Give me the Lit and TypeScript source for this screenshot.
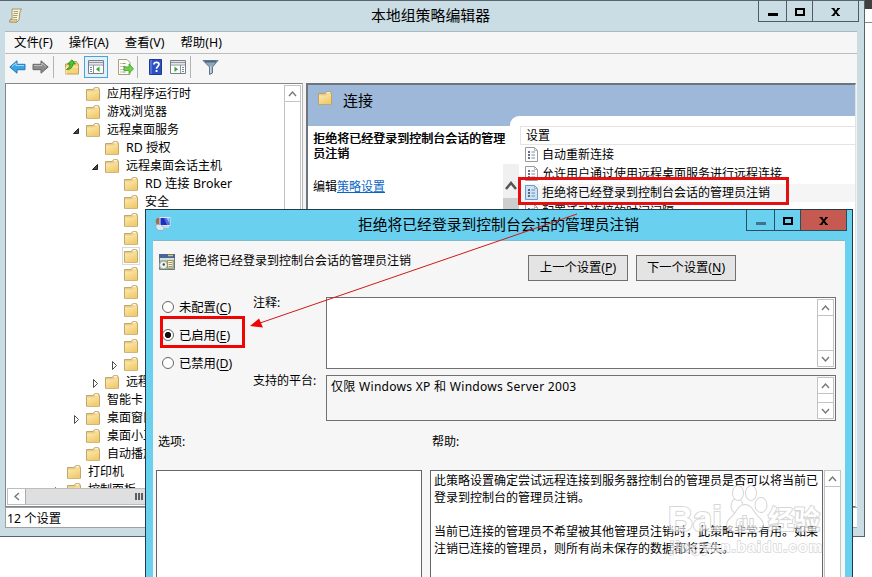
import { LitElement, html, css, svg, nothing } from "lit";
import { customElement, property } from "lit/decorators.js";

const base = css`
  * { box-sizing: border-box; }
  :host {
    font-family: "Noto Sans", "Noto Sans CJK SC", sans-serif;
    font-size: 12px;
    color: #000;
    white-space: nowrap;
  }
  svg { display: block; flex: none; }
  u { text-underline-offset: 2px; }
`;

const folder = html`<svg width="14" height="14" viewBox="0 0 14 14">
  <defs><linearGradient id="f" x1="0" y1="0" x2=".6" y2="1"><stop offset="0" stop-color="#fdebb4"/><stop offset="1" stop-color="#f1cb6c"/></linearGradient></defs>
  <path d="M.5 2.500h6.500l1.500-1.800h4L13.500 2.500v10.800H.5z" fill="#e9cd86" stroke="#bb9f61" stroke-width=".9"/>
  <path d="M1 4.500h7L9.500 3.300H13V13H1z" fill="url(#f)"/>
  <path d="M8.800 1.800h3.200" stroke="#fffdf0" stroke-width="1.200"/>
</svg>`;

const scroll = html`<svg width="15" height="15" viewBox="0 0 15 15">
  <path d="M4 1h9.500l-1.500 2.500-1 8.500-2 2H1.500l1-3H4z" fill="#fbf3d4" stroke="#a08d5a" stroke-width=".9"/>
  <path d="M5.500 3.500h4.500M5.500 5.500H10M5 7.500h4.500M5 9.500h4" stroke="#8d876e" stroke-width=".8"/>
  <path d="M1.500 14l1-2.500H9l-.5 2.500z" fill="#e3cf94" stroke="#a08d5a" stroke-width=".6"/>
</svg>`;

const settingIcon = (on: boolean) => html`<svg width="13" height="15" viewBox="0 0 13 15">
  <path d="M.5.5h9l3 3v11H.5z" fill=${on ? "#c9e3f8" : "#fdfdfd"} stroke=${on ? "#6d9cc4" : "#9a9a9a"}/>
  <path d="M9.500.5v3h3" fill="none" stroke="#a5a5a5" stroke-width=".8"/>
  <path d="M3 5h2M3 8h2M3 11h2" stroke="#33415e" stroke-width="1.600"/>
  <path d="M6.500 5h3.500M6.500 8H10M6.500 11H10" stroke="#7d8ca5"/>
</svg>`;

const computer = html`<svg width="16" height="15" viewBox="0 0 16 15">
  <path d="M1 3.500Q2.500.8 5 2v6H1.500Q0 6 1 3.500z" fill="#9a7258"/>
  <path d="M4.500 1h11v9h-11z" fill="#dfe6ee"/>
  <path d="M5.500 2h9v7h-9z" fill="#1b2fc0"/>
  <path d="M9 2h5.500v7H12z" fill="#4d74e0"/>
  <path d="M11.500 2h3v5z" fill="#a3c0f7"/>
  <path d="M1 8.500h4.500l4 3.500-2 2.500H3.500L.8 12z" fill="#dfe7ee" stroke="#8b9dab" stroke-width=".7"/>
  <path d="M8.500 11h5.500" stroke="#c9d4dc" stroke-width="2"/>
</svg>`;

const policy = html`<svg width="16" height="16" viewBox="0 0 16 16">
  <path d="M.5.500h15v15H.5z" fill="#a9bcae" stroke="#6c7b75"/>
  <path d="M0 0h16v4H0z" fill="#4a639b"/>
  <path d="M9 1.500h5" stroke="#e8c34e" stroke-width="1.500"/>
  <path d="M1 5h14" stroke="#e8ece8" stroke-width="1.500"/>
  <circle cx="4.500" cy="11" r="4" fill="#edf1ec" stroke="#7b8a83" stroke-width=".7"/>
  <circle cx="4.800" cy="10.500" r="1.200" fill="#43524c"/>
  <path d="M8.500 6.500h5.500v7.500H8.500z" fill="#fff4c9" stroke="#8c8356" stroke-width=".8"/>
  <path d="M9.500 8.500h3.500M9.500 10.500H13M9.500 12.500H13" stroke="#8f8a6d" stroke-width=".9"/>
</svg>`;

const chevron = (d: string) => {
  const paths: Record<string, string> = {
    up: "M1 7l3.500-4L8 7",
    down: "M1 3l3.500 4L8 3",
    left: "M7 1L3 4.500 7 8",
  };
  return html`<svg width="9" height="9" viewBox="0 0 9 9">
    <path d=${paths[d]} fill="none" stroke="#777" stroke-width="1.400"/>
  </svg>`;
};

@customElement("caption-buttons")
class CaptionButtons extends LitElement {
  @property({ type: Boolean, reflect: true }) modal = false;
  static styles = [base, css`
    :host { display: flex; height: 21px; border: 1px solid #4d5c66; border-top: 0; }
    div { display: flex; justify-content: center; }
    .min { width: 27px; }
    .max { width: 27px; border: solid #4d5c66; border-width: 0 1px; }
    .close { width: 45px; }
    :host([modal]) { border-color: #27505f; }
    :host([modal]) .max { border-color: #27505f; }
    :host([modal]) .close { background: #c75a50; }
  `];
  render() {
    return html`
      <div class="min"><svg width="12" height="20" viewBox="0 0 12 20"><path d="M1 12h10v3H1z" fill=${this.modal ? "#3f7486" : "#000"}/></svg></div>
      <div class="max"><svg width="12" height="20" viewBox="0 0 12 20"><path d="M2 8h8v6H2z" fill="none" stroke="#000" stroke-width="2"/></svg></div>
      <div class="close"><svg width="12" height="20" viewBox="0 0 12 20"><path d="M3 7.500l5.500 7M8.500 7.500L3 14.500" stroke="#000" stroke-width="2"/><path d="M1.500 7.500h3M7 7.500h3M1.500 14.500h3M7 14.500h3" stroke="#000"/></svg></div>`;
  }
}

@customElement("scroll-bar")
class ScrollBar extends LitElement {
  @property({ type: Boolean }) down = false;
  static styles = [base, css`
    :host { display: flex; flex-direction: column; justify-content: space-between; width: 17px; background: #fff; border: 1px solid #c3c3c3; }
    div { height: 16px; display: flex; align-items: center; justify-content: center; border: 0 solid #c3c3c3; }
    .up { border-bottom-width: 1px; }
    .dn { border-top-width: 1px; }
  `];
  render() {
    return html`<div class="up">${chevron("up")}</div>${this.down ? html`<div class="dn">${chevron("down")}</div>` : nothing}`;
  }
}

type Row = { t: string; l: number; a?: "open" | "shut"; sel?: boolean };
const rows: Row[] = [
  { t: "应用程序运行时", l: 1 },
  { t: "游戏浏览器", l: 1 },
  { t: "远程桌面服务", l: 1, a: "open" },
  { t: "RD 授权", l: 2 },
  { t: "远程桌面会话主机", l: 2, a: "open" },
  { t: "RD 连接 Broker", l: 3 },
  { t: "安全", l: 3 },
  { t: "", l: 3 },
  { t: "", l: 3 },
  { t: "", l: 3, sel: true },
  { t: "", l: 3 },
  { t: "", l: 3 },
  { t: "", l: 3 },
  { t: "", l: 3 },
  { t: "", l: 3 },
  { t: "", l: 3, a: "shut" },
  { t: "远程", l: 2, a: "shut" },
  { t: "智能卡", l: 1 },
  { t: "桌面窗口", l: 1, a: "shut" },
  { t: "桌面小工", l: 1 },
  { t: "自动播放", l: 1 },
  { t: "打印机", l: 0 },
  { t: "控制面板", l: 0, a: "shut" },
];

@customElement("policy-tree")
class PolicyTree extends LitElement {
  static styles = [base, css`
    :host { display: flex; flex-direction: column; width: 298px; background: #fff; border: 1px solid #82878c; border-right-color: #b5b5b5; }
    .main { display: flex; height: 404px; }
    .list { flex: 1; overflow: hidden; padding-top: 1px; }
    .row { display: flex; align-items: center; height: 18px; }
    .l0 { padding-left: 47px; } .l1 { padding-left: 66px; }
    .l2 { padding-left: 85px; } .l3 { padding-left: 104px; }
    .arrow { width: 10px; margin-right: 4px; padding-top: 2px; }
    .row b { font-weight: 400; line-height: 18px; padding-left: 7px; }
    .latin b { font-size: 12.4px; }
    .sel .icon { outline: 1px solid #dadada; outline-offset: 1px; }
    scroll-bar { margin-top: 1px; margin-right: 1px; }
    .h { display: flex; height: 17px; border: 1px solid #bdbdbd; margin: 0 1px; background: #fff; }
    .left { width: 17px; display: flex; align-items: center; justify-content: center; }
    .thumb { flex: 1; background: #dfdfdf; border-left: 1px solid #adadad; display: flex; align-items: center; padding-left: 109px; gap: 1px; }
    .thumb i { width: 2px; height: 7px; background: #5c5c5c; }
  `];
  render() {
    return html`
      <div class="main"><div class="list">${rows.map((r) => html`
        <div class="row l${r.l} ${r.sel ? "sel" : ""} ${/[A-Z]/.test(r.t) ? "latin" : ""}">
          <span class="arrow">${r.a ? html`<svg width="8" height="12" viewBox="0 0 8 12">${r.a === "open"
            ? svg`<path d="M6.500 3.500v5h-5z" fill="#4b4b4b" stroke="#222"/>`
            : svg`<path d="M2.500 2.500l4 4-4 4z" fill="#fff" stroke="#4d4d4d"/>`}</svg>` : nothing}</span>
          <span class="icon">${folder}</span><b>${r.t}</b>
        </div>`)}</div><scroll-bar></scroll-bar></div>
      <div class="h"><div class="left">${chevron("left")}</div><div class="thumb"><i></i><i></i><i></i></div></div>`;
  }
}

@customElement("detail-pane")
class DetailPane extends LitElement {
  static styles = [base, css`
    :host { display: flex; flex-direction: column; width: 550px; background: #9db8d8; border: 2px solid #70757d; border-width: 2px 1px 1px 2px; border-right-color: #e3e3e3; }
    .head { height: 31px; display: flex; align-items: center; padding: 0 0 3px 10px; gap: 11px; font-size: 15px; }
    .head svg { margin-bottom: 3px; }
    .body { flex: 1; display: flex; }
    .desc { width: 202px; margin-top: 10px; background: #fff; padding: 5px 0 0 5px; line-height: 15px; display: flex; position: relative; z-index: 1; }
    .text { width: 190px; flex: none; }
    .text p { margin: 0; }
    .text .b { white-space: normal; width: 195px; text-shadow: .5px 0 0 #000; }
    .edit { padding-top: 18px; }
    .edit u { color: #0b66c3; text-underline-offset: 1px; }
    .scroll { margin: 33px 0 0; width: 16px; flex: none; background: #f0f0f0; display: flex; flex-direction: column; }
    .scroll svg { margin: 15px 0 0 1px; }
    .scroll i { background: #cdcdcd; margin-top: 6px; flex: 1; }
    .list { flex: 1; background: #fff; border-top-left-radius: 9px; padding-top: 10px; padding-left: 10px; display: flex; flex-direction: column; }
    .hd { height: 19px; border: 1px solid #e4e4e4; border-right: 0; padding-left: 5px; line-height: 18px; }
    .it { height: 19px; display: flex; align-items: center; gap: 4px; padding-left: 5px; line-height: 19px; }
    .on { background: linear-gradient(#f5f5f5, #f5f5f5) no-repeat 0 1px / 100% 18px; }
  `];
  render() {
    const items = ["自动重新连接", "允许用户通过使用远程桌面服务进行远程连接", "拒绝将已经登录到控制台会话的管理员注销", "配置活动连接的时间间隔"];
    return html`
      <div class="head">${folder}<span>连接</span></div>
      <div class="body">
        <div class="desc">
          <div class="text"><p class="b">拒绝将已经登录到控制台会话的管理员注销</p><p class="edit">编辑<u>策略设置</u></p></div>
          <div class="scroll"><svg width="14" height="13" viewBox="0 0 14 13"><path d="M2 10l5-6 5 6" fill="none" stroke="#555" stroke-width="2.500"/></svg><i></i></div>
        </div>
        <div class="list"><div class="hd">设置</div>
          ${items.map((t, i) => html`<div class="it ${i === 2 ? "on" : ""}">${settingIcon(i === 2)}<span>${t}</span></div>`)}
        </div>
      </div>`;
  }
}

@customElement("tool-bar")
class ToolBar extends LitElement {
  static styles = [base, css`
    :host { display: flex; align-items: center; height: 30px; padding: 0 0 4px 4px; background: #f6f6f6; }
    i { width: 1px; height: 22px; background: #b4b4b4; }
    .g { display: flex; align-items: center; }
    .nav { gap: 6px; padding-right: 4px; }
    .two { padding-left: 10px; }
    .three { padding: 0 3px 0 9px; }
    .four { padding: 0 4px 0 10px; gap: 7px; }
    .five { padding-left: 11px; }
    .act { margin-left: 3px; width: 24px; height: 22px; border: 1px solid #4aa3d8; background: #e2f1fb; display: flex; align-items: center; justify-content: center; }
  `];
  render() {
    const pane = (right: boolean) => html`<svg width="16" height="14" viewBox="0 0 16 14">
      <path d="M.5.500h15v13H.5z" fill="#fdfdfd" stroke="#7a7f87"/>
      <path d="M1 2.500h14" stroke="#9299a5" stroke-width="1.500"/><path d="M1 5h14M${right ? 10 : 5}.5 5v8" stroke="#8b9099"/>
      <path d="M${right ? "4.500 6.500l3.500 2.700-3.500 2.700" : "11.500 6.500L8 9.200l3.500 2.700"}z" fill="#35a52d"/>
      <path d="M${right ? "12 7.500h2M12 9.500h2M12 11.500h2" : "2 7.500h2M2 9.500h2M2 11.500h2"}" stroke="#7689a8"/>
    </svg>`;
    const arrow = (f: string, s: string, hi: string, flip: boolean) => html`<svg width="17" height="14" viewBox="0 0 17 14">
      <g transform=${flip ? "matrix(-1 0 0 1 17 0)" : ""}><path d="M.8 7L8 .8v3.500h8v5.400H8v3.500z" fill=${f} stroke=${s}/><path d="M3 6.500L7 3v2.500h8" fill="none" stroke=${hi}/></g></svg>`;
    return html`
      <div class="g nav">${arrow("#3aa5e6", "#2b76b4", "#9bdcff", false)}${arrow("#8c8c8c", "#686868", "#bdbdbd", true)}</div><i></i>
      <div class="g two">
        <svg width="17" height="16" viewBox="0 0 17 16"><path d="M1.500 5h6l1-2.500h4l1 2.500h1v10h-13z" fill="#f5d37b" stroke="#c0a05a"/><path d="M2 15V8h12" stroke="#fff0b5" fill="none"/><path d="M2.500 10.500Q6 9 6 5H3.500L8 .8 11.500 5H9q-.5 5.500-6.500 5.500z" fill="#49c52f" stroke="#2a8a1b" stroke-width=".8"/></svg>
        <span class="act">${pane(false)}</span>
      </div>
      <div class="g three"><svg width="17" height="16" viewBox="0 0 17 16"><path d="M1.500.5h8.500l3 3v12H1.500z" fill="#fffdf2" stroke="#a59f87"/><path d="M3.500 4.500h5M3.500 7.500h5M3.500 10.500h4M3.500 13h5" stroke="#8b8b8b" stroke-dasharray="1 1 6"/><path d="M7 8h5V5l4.500 4.800L12 14.500v-3H7z" fill="#6bd643" stroke="#3d9c2b" stroke-width=".8"/></svg></div><i></i>
      <div class="g four"><svg width="15" height="16" viewBox="0 0 15 16"><path d="M1.500.5h12v15h-12z" fill="#2c4fc4" stroke="#203a8c"/><path d="M3 1v14" stroke="#7b97ee"/><path d="M5.800 5.500C6 2.500 11 2.700 11 5.300c0 2-2.500 2-2.500 4.400" fill="none" stroke="#fff" stroke-width="1.700"/><path d="M7.600 11h1.900v2H7.600z" fill="#fff"/></svg>${pane(true)}</div><i></i>
      <div class="g five"><svg width="17" height="16" viewBox="0 0 17 16"><path d="M1 1.500h15L10.500 8v6l-3 1.500V8z" fill="#8fa6ba" stroke="#60788d"/><path d="M3 2.700h11" stroke="#49667f" stroke-width="1.500"/><path d="M8.800 7v7" stroke="#dbe6ee"/></svg></div>`;
  }
}

@customElement("editor-window")
class EditorWindow extends LitElement {
  static styles = [base, css`
    :host { display: flex; flex-direction: column; background: #cadce4; border: 1px solid #57646d; border-left: 0; padding: 0 7px 8px 5px; isolation: isolate; }
    :host > *, .title, .menu, tool-bar, .panes { flex: none; }
    .title { height: 30px; display: flex; align-items: flex-start; }
    .title .ic { padding: 7px 0 0 3px; }
    .title .name { flex: 1; text-align: center; line-height: 29px; padding-left: 80px; font-size: 14.9px; }
    .title caption-buttons { margin-right: -2px; }
    .menu { height: 23px; display: flex; gap: 16px; padding-left: 9px; line-height: 21px; background: #f6f6f6; border-top: 1px solid #a9b9c1; border-bottom: 1px solid #b8bdc0; font-size: 12.4px; }
    tool-bar { height: 29px; }
    .panes { height: 424px; display: flex; gap: 3px; background: #f3f3f3; padding-right: 1px; }
    .status { height: 21px; background: #fff; border: 1px solid #9ba2a6; border-width: 1px 0 1px 1px; line-height: 21px; padding-left: 1px; font-size: 12.3px; }
  `];
  render() {
    return html`
      <div class="title"><span class="ic">${scroll}</span><span class="name">本地组策略编辑器</span><caption-buttons></caption-buttons></div>
      <div class="menu"><span>文件(F)</span><span>操作(A)</span><span>查看(V)</span><span>帮助(H)</span></div>
      <tool-bar></tool-bar>
      <div class="panes"><policy-tree></policy-tree><detail-pane></detail-pane></div>
      <div class="status">12 个设置</div>`;
  }
}

@customElement("setting-dialog")
class SettingDialog extends LitElement {
  static styles = [base, css`
    :host { display: flex; flex-direction: column; background: #69d0f0; border: 1px solid #1f3c48; border-bottom: 0; padding: 0 7px; }
    .title { height: 30px; display: flex; }
    .title .ic { padding: 6px 0 0 2px; }
    .title .name { flex: 1; text-align: center; line-height: 29px; font-size: 14.8px; padding-left: 80px; }
    .title caption-buttons { margin-right: -2px; }
    .client { flex: 1; background: #f6f6f6; overflow: hidden; border-top: 1px solid #83b8c9; }
    .top { height: 56px; display: flex; padding: 14px 0 0 6px; }
    .top svg { margin-top: -1px; }
    .top .pol { width: 345px; margin-left: 8px; line-height: 11px; }
    .btn { width: 100px; height: 26px; margin-right: 8px; border: 1px solid #707070; background: #e4e4e4; text-align: center; line-height: 24px; font-size: 12.3px; }
    .mid { display: flex; height: 124px; }
    .radios { width: 91px; padding: 0 0 0 9px; margin-top: -4px; font-size: 12.3px; }
    .radios div { height: 28px; display: flex; align-items: center; gap: 5px; }
    .radios i { width: 12px; height: 12px; border: 1px solid #666; border-radius: 50%; background: #fff; }
    .radios .on { background: radial-gradient(circle, #111 0 2.800px, #fff 3.400px); }
    .labels { width: 82px; padding-left: 9px; margin-top: -3px; line-height: 18px; }
    .labels div { height: 78px; }
    .labels div + div { height: 20px; }
    .boxes { display: flex; flex-direction: column; gap: 6px; width: 510px; }
    .box { border: 1px solid #707070; height: 72px; background: #fff; display: flex; justify-content: space-between; padding: 1px; }
    .box.low { height: 46px; background: #f6f6f6; line-height: 20px; padding-left: 4px; font-size: 12.050px; }
    .low span { letter-spacing: .27px; }
    .caps { height: 49px; display: flex; padding: 12px 0 0 5px; line-height: 18px; }
    .caps span { width: 274px; }
    .bottom { display: flex; height: 108px; padding-left: 3px; }
    .opt { width: 266px; margin-right: 8px; background: #fff; border: 1px solid #666; border-bottom: 0; }
    .help { width: 393px; background: #fff; border: 1px solid #666; border-bottom: 0; padding: 1px 3px; line-height: 17px; }
    .help p { margin: 0 0 17px; }
    .bottom scroll-bar { margin-left: 1px; }
  `];
  render() {
    return html`
      <div class="title"><span class="ic">${computer}</span><span class="name">拒绝将已经登录到控制台会话的管理员注销</span><caption-buttons modal></caption-buttons></div>
      <div class="client">
        <div class="top">${policy}<span class="pol">拒绝将已经登录到控制台会话的管理员注销</span><div class="btn">上一个设置(<u>P</u>)</div><div class="btn">下一个设置(<u>N</u>)</div></div>
        <div class="mid">
          <div class="radios"><div><i></i><span>未配置(<u>C</u>)</span></div><div><i class="on"></i><span>已启用(<u>E</u>)</span></div><div><i></i><span>已禁用(<u>D</u>)</span></div></div>
          <div class="labels"><div>注释:</div><div>支持的平台:</div></div>
          <div class="boxes"><div class="box"><span></span><scroll-bar down></scroll-bar></div><div class="box low"><span>仅限 Windows XP 和 Windows Server 2003</span><scroll-bar down></scroll-bar></div></div>
        </div>
        <div class="caps"><span>选项:</span><span>帮助:</span></div>
        <div class="bottom"><div class="opt"></div>
          <div class="help"><p>此策略设置确定尝试远程连接到服务器控制台的管理员是否可以将当前已<br>登录到控制台的管理员注销。</p><p>当前已连接的管理员不希望被其他管理员注销时，此策略非常有用。如果<br>注销已连接的管理员，则所有尚未保存的数据都将丢失。</p></div>
          <scroll-bar></scroll-bar></div>
      </div>`;
  }
}

@customElement("app-root")
class AppRoot extends LitElement {
  static styles = [base, css`
    :host { display: block; position: relative; width: 872px; height: 577px; overflow: hidden; background: #fff; }
    .behind { position: absolute; left: 865px; top: 0; width: 7px; height: 23px; border-top: 9px solid #404040; border-bottom: 1px solid #8a8a8a; }
    editor-window { position: absolute; left: 0; top: 0; width: 865px; height: 537px; }
    setting-dialog { position: absolute; left: 145px; top: 209px; width: 708px; height: 368px; }
    .mark { position: absolute; left: 518px; top: 177px; width: 271px; height: 28px; border: 3px solid #e60f0f; }
    .mark2 { position: absolute; left: 160px; top: 316px; width: 85px; height: 32px; border: 3px solid #f00505; }
    .line { position: absolute; left: 0; top: 0; }
    .wm { position: absolute; left: 664px; top: 483px; }
  `];
  render() {
    return html`
      <div class="behind"></div>
      <editor-window></editor-window>
      <div class="mark"></div>
      <setting-dialog></setting-dialog>
      <div class="mark2"></div>
      <svg class="line" width="872" height="577" viewBox="0 0 872 577"><path d="M577 214L260 323" stroke="#d01818"/><path d="M250 326l9-7.500 4 9z" fill="#f00505"/></svg>
      <svg class="wm" width="170" height="76" viewBox="0 0 170 76" opacity=".68">
        <g fill="#fff" stroke="#c4c4c4" stroke-width="2" paint-order="stroke">
          <ellipse cx="73" cy="23" rx="5.500" ry="7"/><ellipse cx="74" cy="10" rx="5" ry="7"/><ellipse cx="87" cy="10" rx="5" ry="7"/><ellipse cx="97" cy="22" rx="5.500" ry="7"/>
          <path d="M81 22c7 0 8 8 14 13 7 6 4 14-5 14H72c-9 0-12-8-5-14 6-5 7-13 14-13z"/>
          <text x="4" y="48" font-family="Liberation Sans" font-weight="700" font-size="35" textLength="54" lengthAdjust="spacingAndGlyphs">Bai</text>
          <text x="72" y="46" font-family="Liberation Sans" font-weight="700" font-size="18" textLength="18">du</text>
          <text x="104" y="46" font-family="Noto Sans CJK SC" font-weight="700" font-size="26">经验</text>
          <text x="6" y="69" font-family="Liberation Sans" font-weight="700" font-size="15" textLength="152" stroke-width="1.500">jingyan.baidu.com</text>
        </g>
      </svg>`;
  }
}
